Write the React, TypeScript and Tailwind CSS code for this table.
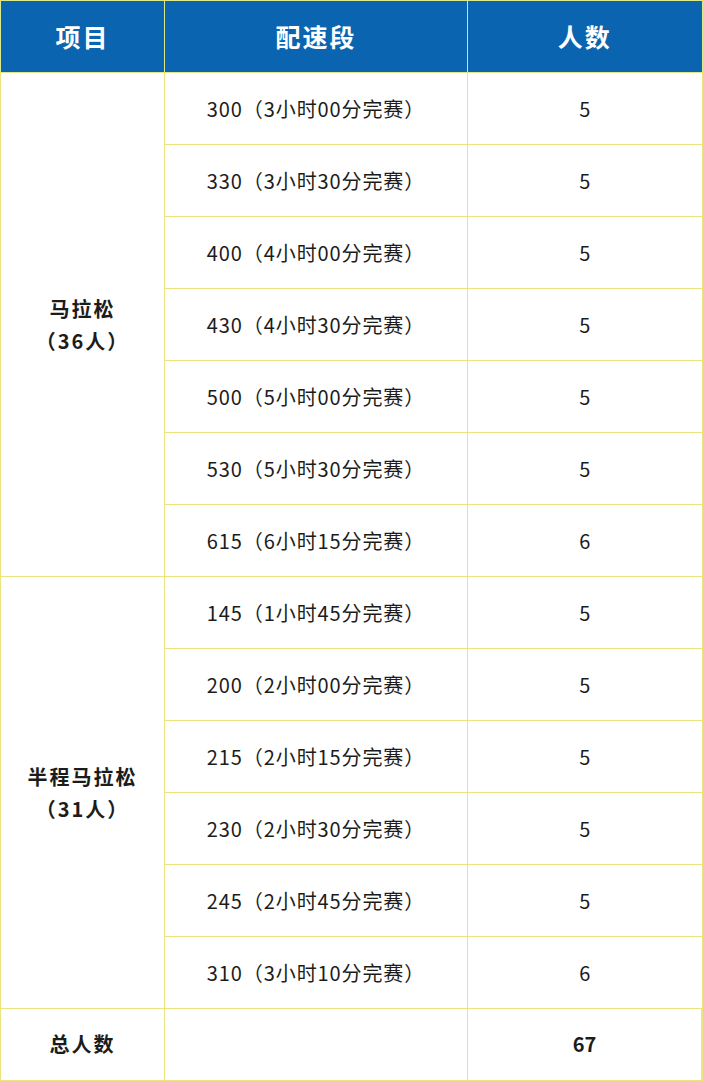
const FONT = { fontFamily: '"Noto Sans CJK SC", "Noto Sans", sans-serif' }

const marathon = [
  ["300（3小时00分完赛）", "5"],
  ["330（3小时30分完赛）", "5"],
  ["400（4小时00分完赛）", "5"],
  ["430（4小时30分完赛）", "5"],
  ["500（5小时00分完赛）", "5"],
  ["530（5小时30分完赛）", "5"],
  ["615（6小时15分完赛）", "6"],
]

const half = [
  ["145（1小时45分完赛）", "5"],
  ["200（2小时00分完赛）", "5"],
  ["215（2小时15分完赛）", "5"],
  ["230（2小时30分完赛）", "5"],
  ["245（2小时45分完赛）", "5"],
  ["310（3小时10分完赛）", "6"],
]

const cell = "border border-[#ede37f] text-center align-middle"

const Group = ({ title, count, rows }: { title: string; count: string; rows: string[][] }) => (
  <>
    {rows.map(([pace, n], i) => (
      <tr key={pace} className="h-[72px]">
        {i === 0 && (
          <td rowSpan={rows.length} className={`${cell} text-[20px] font-bold leading-[32px] tracking-[2px] text-[#1c1c1c]`}>
            {title}
            <br />
            {count}
          </td>
        )}
        <td className={`${cell} text-[20px] tracking-[0.9px] text-[#1c1c1c]`}>{pace}</td>
        <td className={`${cell} text-[20px] text-[#1c1c1c]`}>{n}</td>
      </tr>
    ))}
  </>
)

const App = () => {
  return (
    <div className="h-[1081px] w-[703px] bg-white" style={FONT}>
      <table className="w-[703px] table-fixed border-collapse">
        <colgroup>
          <col className="w-[164px]" />
          <col className="w-[303px]" />
          <col />
        </colgroup>
        <thead>
          <tr className="h-[72px] bg-[#0b64b0] text-[25px] font-bold tracking-[2px] text-white">
            <th className="border border-[#dce88a]">项目</th>
            <th className="border border-[#dce88a]">配速段</th>
            <th className="border border-[#dce88a]">人数</th>
          </tr>
        </thead>
        <tbody>
          <Group title="马拉松" count="（36人）" rows={marathon} />
          <Group title="半程马拉松" count="（31人）" rows={half} />
          <tr className="h-[72px]">
            <td className={`${cell} border-b-2 text-[20px] font-bold tracking-[2px] text-[#1c1c1c]`}>总人数</td>
            <td className={`${cell} border-b-2`}></td>
            <td className={`${cell} border-b-2 border-r-2 text-[20px] font-bold text-[#1c1c1c]`}>67</td>
          </tr>
        </tbody>
      </table>
    </div>
  )
}

export default App
